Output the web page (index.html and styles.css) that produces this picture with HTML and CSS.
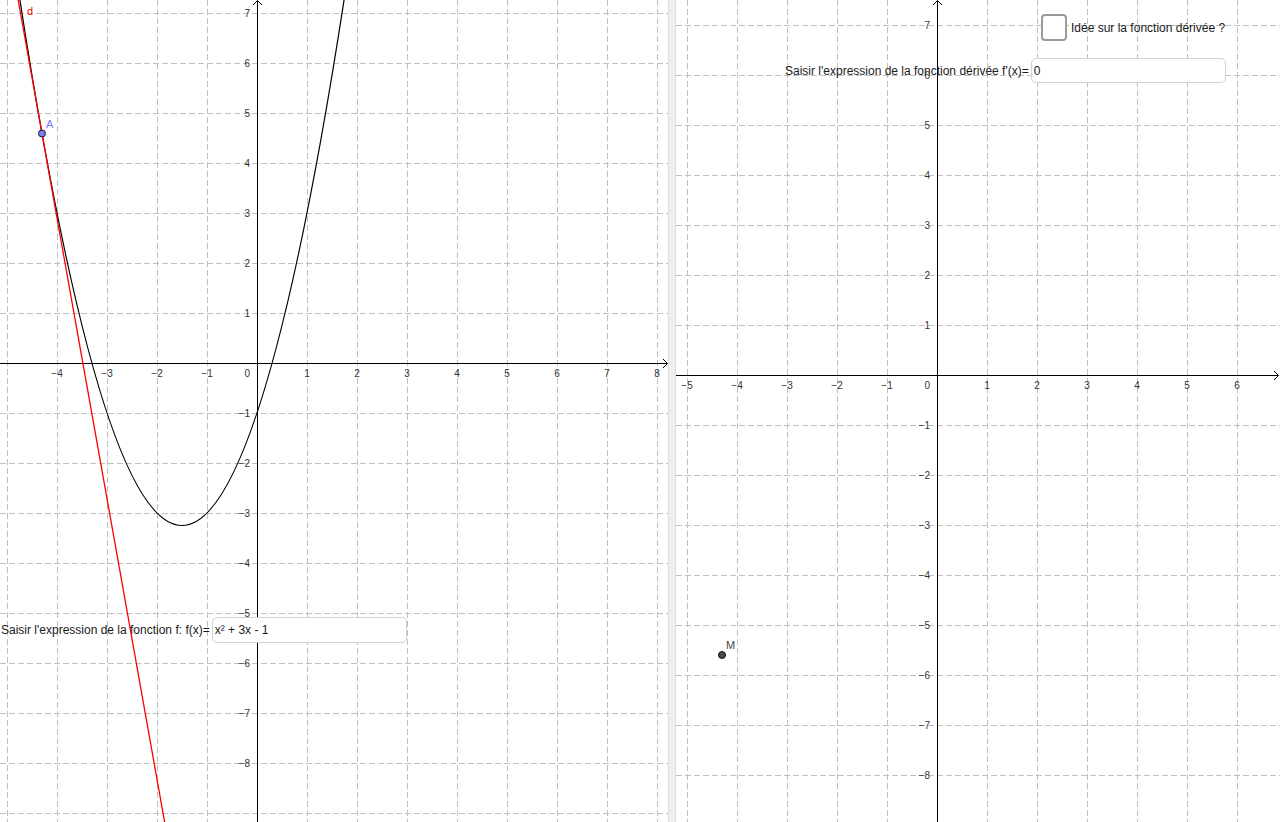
FILE: index.html
```html
<!DOCTYPE html>
<html lang="fr">
<head>
<meta charset="utf-8">
<title>Fonction dérivée</title>
<link rel="stylesheet" href="styles.css">
</head>
<body>
<div class="app">
  <section class="view view-left">
    <svg class="canvas" width="668" height="822" viewBox="0 0 668 822" xmlns="http://www.w3.org/2000/svg">
      <g class="grid">
        <line x1="7.5" y1="0" x2="7.5" y2="822"/><line x1="57.5" y1="0" x2="57.5" y2="822"/>
        <line x1="107.5" y1="0" x2="107.5" y2="822"/><line x1="157.5" y1="0" x2="157.5" y2="822"/>
        <line x1="207.5" y1="0" x2="207.5" y2="822"/><line x1="307.5" y1="0" x2="307.5" y2="822"/>
        <line x1="357.5" y1="0" x2="357.5" y2="822"/><line x1="407.5" y1="0" x2="407.5" y2="822"/>
        <line x1="457.5" y1="0" x2="457.5" y2="822"/><line x1="507.5" y1="0" x2="507.5" y2="822"/>
        <line x1="557.5" y1="0" x2="557.5" y2="822"/><line x1="607.5" y1="0" x2="607.5" y2="822"/>
        <line x1="657.5" y1="0" x2="657.5" y2="822"/>
        <line x1="0" y1="13.5" x2="668" y2="13.5"/><line x1="0" y1="63.5" x2="668" y2="63.5"/>
        <line x1="0" y1="113.5" x2="668" y2="113.5"/><line x1="0" y1="163.5" x2="668" y2="163.5"/>
        <line x1="0" y1="213.5" x2="668" y2="213.5"/><line x1="0" y1="263.5" x2="668" y2="263.5"/>
        <line x1="0" y1="313.5" x2="668" y2="313.5"/><line x1="0" y1="413.5" x2="668" y2="413.5"/>
        <line x1="0" y1="463.5" x2="668" y2="463.5"/><line x1="0" y1="513.5" x2="668" y2="513.5"/>
        <line x1="0" y1="563.5" x2="668" y2="563.5"/><line x1="0" y1="613.5" x2="668" y2="613.5"/>
        <line x1="0" y1="663.5" x2="668" y2="663.5"/><line x1="0" y1="713.5" x2="668" y2="713.5"/>
        <line x1="0" y1="763.5" x2="668" y2="763.5"/><line x1="0" y1="813.5" x2="668" y2="813.5"/>
      </g>
      <g class="axis">
        <line x1="0" y1="363.5" x2="667" y2="363.5"/>
        <line x1="257.5" y1="1" x2="257.5" y2="822"/>
        <polyline points="663,359 667.5,363.5 663,368"/>
        <polyline points="253,5 257.5,0.5 262,5"/>
      </g>
      <g class="ticks-x">
        <text x="57" y="377">−4</text><text x="107" y="377">−3</text><text x="157" y="377">−2</text>
        <text x="207" y="377">−1</text><text x="307" y="377">1</text><text x="357" y="377">2</text>
        <text x="407" y="377">3</text><text x="457" y="377">4</text><text x="507" y="377">5</text>
        <text x="557" y="377">6</text><text x="607" y="377">7</text><text x="657" y="377">8</text>
      </g>
      <g class="ticks-y">
        <text x="250" y="377">0</text>
        <text x="250" y="17">7</text><text x="250" y="67">6</text><text x="250" y="117">5</text>
        <text x="250" y="167">4</text><text x="250" y="217">3</text><text x="250" y="267">2</text>
        <text x="250" y="317">1</text><text x="250" y="417">−1</text><text x="250" y="467">−2</text>
        <text x="250" y="517">−3</text><text x="250" y="567">−4</text><text x="250" y="617">−5</text>
        <text x="250" y="667">−6</text><text x="250" y="717">−7</text><text x="250" y="767">−8</text>
      </g>
      <path class="curve" d="M18.4,-10 Q182,1061 345.6,-10"/>
      <line class="tangent" x1="16.4" y1="-10" x2="166.4" y2="832"/>
      <text class="label-tangent" x="27" y="15">d</text>
      <circle class="point-a" cx="42" cy="133.5" r="3.5"/>
      <text class="label-a" x="46" y="128">A</text>
    </svg>
    <div class="input-row input-f">
      <span class="input-label">Saisir l'expression de la fonction f: f(x)=</span>
      <div class="input-box input-box-f">x² + 3x - 1</div>
    </div>
  </section>

  <div class="divider"></div>

  <section class="view view-right">
    <svg class="canvas" width="604" height="822" viewBox="0 0 604 822" xmlns="http://www.w3.org/2000/svg">
      <g class="grid">
        <line x1="11.5" y1="0" x2="11.5" y2="822"/><line x1="61.5" y1="0" x2="61.5" y2="822"/>
        <line x1="111.5" y1="0" x2="111.5" y2="822"/><line x1="161.5" y1="0" x2="161.5" y2="822"/>
        <line x1="211.5" y1="0" x2="211.5" y2="822"/><line x1="311.5" y1="0" x2="311.5" y2="822"/>
        <line x1="361.5" y1="0" x2="361.5" y2="822"/><line x1="411.5" y1="0" x2="411.5" y2="822"/>
        <line x1="461.5" y1="0" x2="461.5" y2="822"/><line x1="511.5" y1="0" x2="511.5" y2="822"/>
        <line x1="561.5" y1="0" x2="561.5" y2="822"/>
        <line x1="0" y1="25.5" x2="604" y2="25.5"/><line x1="0" y1="75.5" x2="604" y2="75.5"/>
        <line x1="0" y1="125.5" x2="604" y2="125.5"/><line x1="0" y1="175.5" x2="604" y2="175.5"/>
        <line x1="0" y1="225.5" x2="604" y2="225.5"/><line x1="0" y1="275.5" x2="604" y2="275.5"/>
        <line x1="0" y1="325.5" x2="604" y2="325.5"/><line x1="0" y1="425.5" x2="604" y2="425.5"/>
        <line x1="0" y1="475.5" x2="604" y2="475.5"/><line x1="0" y1="525.5" x2="604" y2="525.5"/>
        <line x1="0" y1="575.5" x2="604" y2="575.5"/><line x1="0" y1="625.5" x2="604" y2="625.5"/>
        <line x1="0" y1="675.5" x2="604" y2="675.5"/><line x1="0" y1="725.5" x2="604" y2="725.5"/>
        <line x1="0" y1="775.5" x2="604" y2="775.5"/>
      </g>
      <g class="axis">
        <line x1="0" y1="375.5" x2="602" y2="375.5"/>
        <line x1="261.5" y1="1" x2="261.5" y2="822"/>
        <polyline points="598,371 602.5,375.5 598,380"/>
        <polyline points="257,5 261.5,0.5 266,5"/>
      </g>
      <g class="ticks-x">
        <text x="11" y="389">−5</text><text x="61" y="389">−4</text><text x="111" y="389">−3</text>
        <text x="161" y="389">−2</text><text x="211" y="389">−1</text><text x="311" y="389">1</text>
        <text x="361" y="389">2</text><text x="411" y="389">3</text><text x="461" y="389">4</text>
        <text x="511" y="389">5</text><text x="561" y="389">6</text>
      </g>
      <g class="ticks-y">
        <text x="254" y="389">0</text>
        <text x="254" y="29">7</text><text x="254" y="79">6</text><text x="254" y="129">5</text>
        <text x="254" y="179">4</text><text x="254" y="229">3</text><text x="254" y="279">2</text>
        <text x="254" y="329">1</text><text x="254" y="429">−1</text><text x="254" y="479">−2</text>
        <text x="254" y="529">−3</text><text x="254" y="579">−4</text><text x="254" y="629">−5</text>
        <text x="254" y="679">−6</text><text x="254" y="729">−7</text><text x="254" y="779">−8</text>
      </g>
      <circle class="point-m" cx="46" cy="655" r="3.5"/>
      <text class="label-m" x="50" y="649">M</text>
    </svg>
    <label class="check-row">
      <span class="check-box"></span>
      <span class="check-label">Idée sur la fonction dérivée ?</span>
    </label>
    <div class="input-row input-fp">
      <span class="input-label">Saisir l'expression de la fonction dérivée f'(x)=</span>
      <div class="input-box input-box-fp">0</div>
    </div>
  </section>
</div>
</body>
</html>
```
FILE: styles.css
```css
html, body {
  margin: 0;
  padding: 0;
  background: #ffffff;
  overflow: hidden;
}

body {
  font-family: "Liberation Sans", Arial, sans-serif;
  color: #1a1a1a;
}

.app {
  display: flex;
  width: 1280px;
  height: 822px;
}

.view {
  position: relative;
  height: 822px;
  overflow: hidden;
  background: #ffffff;
}

.view-left {
  width: 668px;
  flex: none;
}

.view-right {
  flex: 1;
}

.divider {
  width: 6px;
  flex: none;
  background: #eeeeee;
  border-left: 1px solid #e0e0e0;
  border-right: 1px solid #e0e0e0;
}

.canvas {
  display: block;
}

.grid line {
  stroke: #c0c0c0;
  stroke-width: 1;
  stroke-dasharray: 6 3;
  shape-rendering: crispEdges;
}

.axis line {
  stroke: #000000;
  stroke-width: 1;
  shape-rendering: crispEdges;
}

.axis polyline {
  fill: none;
  stroke: #000000;
  stroke-width: 1;
}

.ticks-x text,
.ticks-y text {
  font-family: "Liberation Sans", Arial, sans-serif;
  font-size: 10px;
  fill: #333333;
}

.ticks-x text {
  text-anchor: middle;
}

.ticks-y text {
  text-anchor: end;
}

.curve {
  fill: none;
  stroke: #000000;
  stroke-width: 1.2;
}

.tangent {
  stroke: #ff0000;
  stroke-width: 1.3;
}

.label-tangent {
  font-family: "Liberation Sans", Arial, sans-serif;
  font-size: 11px;
  fill: #ff0000;
}

.point-a {
  fill: #7a80e8;
  stroke: #1a1a40;
  stroke-width: 1;
}

.label-a {
  font-family: "Liberation Sans", Arial, sans-serif;
  font-size: 11px;
  fill: #7878ff;
}

.point-m {
  fill: #4a4a4a;
  stroke: #111111;
  stroke-width: 1;
}

.label-m {
  font-family: "Liberation Sans", Arial, sans-serif;
  font-size: 11px;
  fill: #444444;
}

.input-row {
  position: absolute;
  display: flex;
  align-items: center;
  gap: 2px;
  font-size: 12px;
  line-height: 14px;
  white-space: nowrap;
}

.input-f {
  left: 1px;
  top: 617px;
}

.input-fp {
  left: 109px;
  top: 58px;
}

.input-box {
  box-sizing: border-box;
  width: 195px;
  height: 26px;
  border: 1px solid #d2d2d2;
  border-radius: 5px;
  background: #ffffff;
  padding: 0 2px;
  display: flex;
  align-items: center;
  font-size: 12px;
  color: #1a1a1a;
}

.input-box-fp {
  height: 25px;
}

.check-row {
  position: absolute;
  left: 365px;
  top: 14px;
  display: flex;
  align-items: center;
  gap: 4px;
  font-size: 12px;
  white-space: nowrap;
}

.check-box {
  box-sizing: border-box;
  width: 26px;
  height: 27px;
  border: 2px solid #9a9a9a;
  border-radius: 4px;
  background: #ffffff;
}
```
